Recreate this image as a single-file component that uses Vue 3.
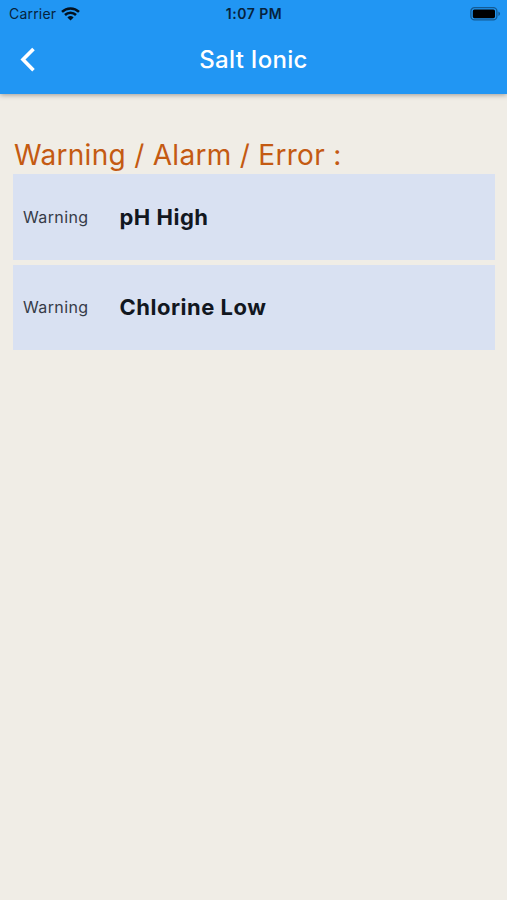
<template>
  <div class="screen">
    <header class="header">
      <div class="status-bar">
        <div class="carrier">
          <span class="carrier-name">Carrier</span>
          <svg class="wifi" viewBox="0 0 19 14" width="19" height="14">
            <path d="M1 4.9a12.2 12.2 0 0 1 17 0" />
            <path d="M4 8a7.8 7.8 0 0 1 11 0" />
            <path class="wifi-dot" d="M9.5 13.4 6.4 10.4a4.5 4.5 0 0 1 6.2 0z" />
          </svg>
        </div>
        <span class="time">1:07 PM</span>
        <div class="battery">
          <svg viewBox="0 0 31 14" width="31" height="14">
            <rect class="battery-case" x="0.9" y="0.7" width="26" height="12.2" rx="3.6" />
            <rect x="2.8" y="2.4" width="22.2" height="8.8" rx="1.6" />
            <path class="battery-cap" d="M28.4 4.6c2.2.8 2.2 3.6 0 4.4z" />
          </svg>
        </div>
      </div>
      <div class="toolbar">
        <button class="back" type="button" aria-label="Back">
          <svg viewBox="0 0 16 26" width="16" height="26">
            <path d="M14.5 2 4 12.6l10.5 10.6" />
          </svg>
        </button>
        <h1 class="title">Salt Ionic</h1>
      </div>
    </header>

    <main class="content">
      <h2 class="heading">Warning / Alarm / Error :</h2>
      <ul class="alerts">
        <li v-for="alert in alerts" :key="alert.message" class="alert">
          <span class="alert-type">{{ alert.type }}</span>
          <strong class="alert-message">{{ alert.message }}</strong>
        </li>
      </ul>
    </main>
  </div>
</template>

<script setup>
const alerts = [
  { type: "Warning", message: "pH High" },
  { type: "Warning", message: "Chlorine Low" },
];
</script>

<style>
body {
  background: #f0ede6;
}
</style>

<style scoped>
.screen {
  min-height: 100vh;
  background: #f0ede6;
  font-family: Inter, "Liberation Sans", sans-serif;
}

.header {
  height: 94px;
  background: #2196f3;
  box-shadow: 0 1px 5px rgba(0, 0, 0, 0.35);
}

.status-bar {
  display: grid;
  grid-template-columns: 1fr auto 1fr;
  align-items: center;
  height: 27px;
  padding: 0 6px 0 7px;
  color: #06233d;
}

.carrier {
  display: flex;
  align-items: center;
  gap: 5px;
  padding-left: 2px;
}

.carrier-name {
  font-size: 14px;
  letter-spacing: 0.2px;
  line-height: 27px;
}

.wifi {
  fill: none;
  stroke: #03111f;
  stroke-width: 2.5;
}

.wifi-dot {
  fill: #03111f;
  stroke: none;
}

.time {
  font-size: 14px;
  font-weight: 600;
  letter-spacing: 0.5px;
  line-height: 27px;
}

.battery {
  display: flex;
  justify-content: flex-end;
  fill: #000;
}

.battery-case {
  fill: none;
  stroke: #145b94;
  stroke-width: 1.3;
}

.battery-cap {
  fill: #145b94;
}

.toolbar {
  display: grid;
  grid-template-columns: 1fr auto 1fr;
  align-items: center;
  height: 66px;
  padding-left: 19px;
  padding-right: 19px;
}

.back {
  display: flex;
  width: 16px;
  padding: 0;
  border: 0;
  background: none;
}

.back svg {
  fill: none;
  stroke: #fff;
  stroke-width: 3.6;
}

.title {
  margin: 0;
  color: #fff;
  font-size: 24px;
  font-weight: 500;
  letter-spacing: 0.3px;
  line-height: 28px;
}

.content {
  padding: 43px 12px 0 13px;
}

.heading {
  margin: 0 0 1px 1px;
  color: #c45a12;
  font-size: 28px;
  font-weight: 400;
  letter-spacing: 0.3px;
  line-height: 36px;
  white-space: nowrap;
}

.alerts {
  display: flex;
  flex-direction: column;
  gap: 5px;
  margin: 0;
  padding: 0;
  list-style: none;
}

.alert {
  display: grid;
  grid-template-columns: 96.5px 1fr;
  align-items: center;
  box-sizing: border-box;
  height: 85.5px;
  padding: 0 0 0 10px;
  background: #d9e1f2;
}

.alert + .alert {
  padding-bottom: 1px;
}

.alert-type {
  color: #363b48;
  font-size: 16px;
  letter-spacing: 0.38px;
}

.alert-message {
  color: #12171f;
  font-size: 22px;
  font-weight: 650;
  letter-spacing: 0.5px;
}
</style>
